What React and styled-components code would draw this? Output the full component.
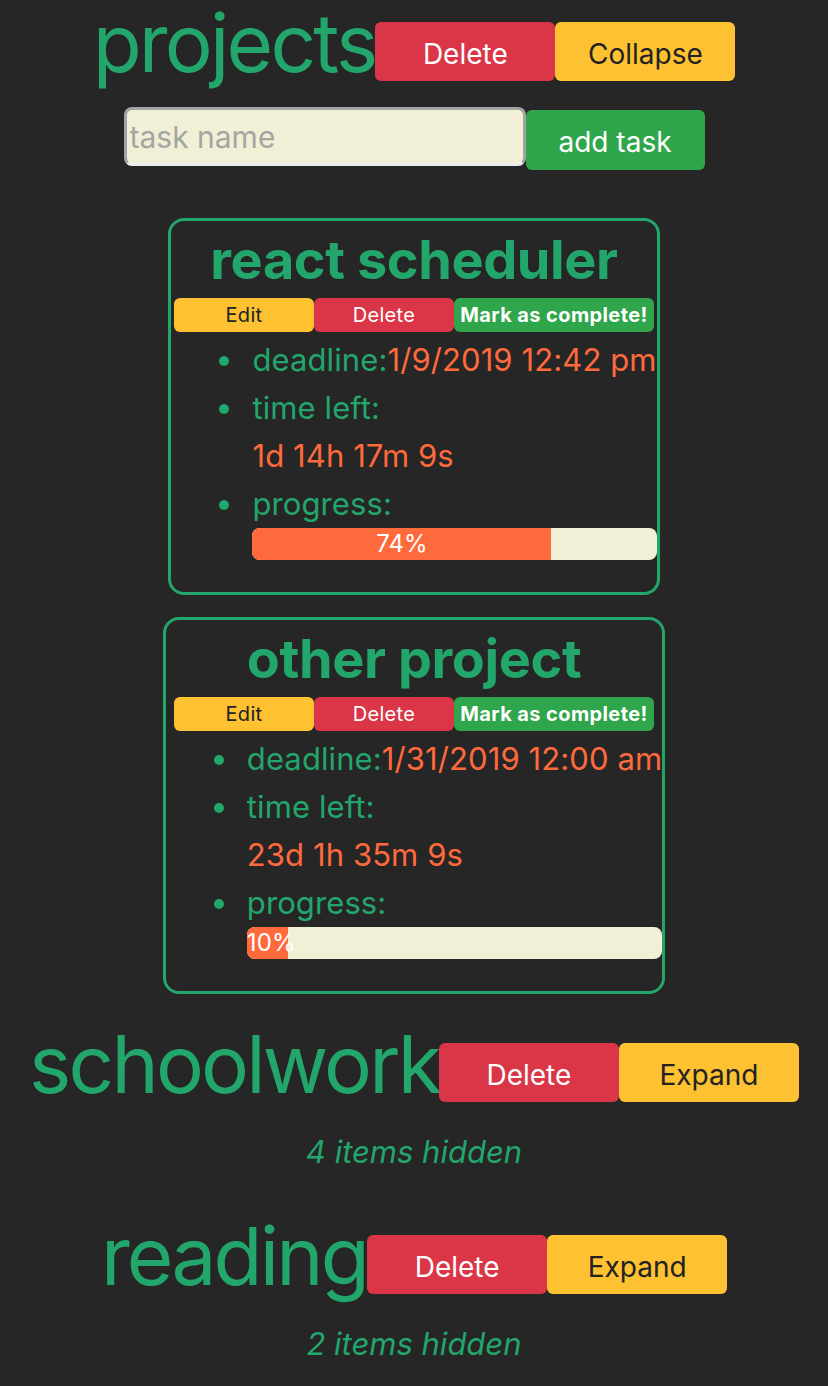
import React from 'react';
import styled, { createGlobalStyle, css } from 'styled-components';

const GREEN = '#22a66b';
const ORANGE = '#ff6a3d';
const CREAM = '#f1f0d6';

const GlobalStyle = createGlobalStyle`
  body {
    margin: 0;
    background: #262626;
    font-family: Inter, "Noto Sans", sans-serif;
  }
`;

const variants = {
  danger: css`
    background: #da3648;
    color: #ffffff;
  `,
  warning: css`
    background: #fdc131;
    color: #222222;
  `,
  success: css`
    background: #2fa64b;
    color: #ffffff;
  `,
};

const Page = styled.div`
  display: flex;
  flex-direction: column;
  align-items: center;
  gap: 27px;
  padding-bottom: 20px;
`;

const Section = styled.section`
  display: flex;
  flex-direction: column;
  align-items: center;
`;

const SectionHeader = styled.div`
  display: flex;
  justify-content: center;
  align-items: center;
`;

const SectionTitle = styled.h1`
  margin: 0 0 17px;
  font-size: 80px;
  line-height: 86px;
  font-weight: 400;
  letter-spacing: -2.8px;
  color: ${GREEN};
`;

const Button = styled.button`
  width: ${(p) => p.$width || 180}px;
  height: 59px;
  padding: 4px 0 0;
  border: none;
  border-radius: 6px;
  font-family: inherit;
  font-size: 28px;
  cursor: pointer;
  ${(p) => variants[p.$variant]}
`;

const TaskForm = styled.form`
  display: flex;
  align-items: flex-start;
  margin-top: 4px;
`;

const TaskInput = styled.input`
  box-sizing: border-box;
  width: 402px;
  height: 59px;
  padding: 0 3px;
  border: 3px solid;
  border-color: #a3a3a3 #a3a3a3 #ececec #a3a3a3;
  border-radius: 8px;
  background: ${CREAM};
  font-family: inherit;
  font-size: 30px;
  outline: none;

  &::placeholder {
    color: #a5a5a2;
  }
`;

const AddButton = styled(Button)`
  height: 60px;
  margin-top: 3px;
`;

const CardList = styled.div`
  display: flex;
  flex-direction: column;
  align-items: center;
  gap: 22px;
  margin-top: 48px;
`;

const Card = styled.div`
  display: flex;
  flex-direction: column;
  border: 3px solid ${GREEN};
  border-radius: 16px;
  padding-bottom: 32px;
`;

const CardTitle = styled.h2`
  margin: 0;
  text-align: center;
  font-size: 54px;
  line-height: 77px;
  font-weight: 700;
  letter-spacing: -0.4px;
  color: ${GREEN};
`;

const CardActions = styled.div`
  display: flex;
  align-self: center;
  width: 480px;
`;

const SmallButton = styled.button`
  width: ${(p) => p.$width}px;
  height: 34px;
  padding: 0;
  border: none;
  border-radius: 6px;
  font-family: inherit;
  font-size: 20px;
  font-weight: ${(p) => (p.$bold ? 700 : 400)};
  letter-spacing: ${(p) => (p.$bold ? 0.4 : 0.3)}px;
  cursor: pointer;
  ${(p) => variants[p.$variant]}
`;

const Details = styled.ul`
  margin: 4px 0 0;
  padding-left: 75px;
  list-style: disc;
  font-size: 31px;
  line-height: 48px;
  letter-spacing: 0.1px;
  color: ${GREEN};

  li {
    padding-left: 6px;
  }
`;

const Value = styled.span`
  color: ${ORANGE};
`;

const ValueLine = styled.div`
  color: ${ORANGE};
`;

const ProgressBar = styled.div`
  display: flex;
  height: 32px;
  border-radius: 8px;
  background: ${CREAM};
  overflow: hidden;
`;

const ProgressFill = styled.div`
  background: ${ORANGE};
  color: #ffffff;
  font-size: 24px;
  line-height: 32px;
  text-align: center;
  white-space: nowrap;
`;

const HiddenNote = styled.p`
  margin: 4px 0 10px;
  font-size: 31px;
  line-height: 48px;
  font-style: italic;
  color: ${GREEN};
`;

const tasks = [
  { name: 'react scheduler', deadline: '1/9/2019 12:42 pm', left: '1d 14h 17m 9s', progress: 74 },
  { name: 'other project', deadline: '1/31/2019 12:00 am', left: '23d 1h 35m 9s', progress: 10 },
];

const TaskCard = ({ task }) => (
  <Card>
    <CardTitle>{task.name}</CardTitle>
    <CardActions>
      <SmallButton $variant="warning" $width={140}>Edit</SmallButton>
      <SmallButton $variant="danger" $width={140}>Delete</SmallButton>
      <SmallButton $variant="success" $width={200} $bold>Mark as complete!</SmallButton>
    </CardActions>
    <Details>
      <li>
        deadline:<Value>{task.deadline}</Value>
      </li>
      <li>
        time left:
        <ValueLine>{task.left}</ValueLine>
      </li>
      <li>
        progress:
        <ProgressBar>
          <ProgressFill style={{ width: `${task.progress}%` }}>{task.progress}%</ProgressFill>
        </ProgressBar>
      </li>
    </Details>
  </Card>
);

const App = () => (
  <>
    <GlobalStyle />
    <Page>
      <Section>
        <SectionHeader>
          <SectionTitle>projects</SectionTitle>
          <Button $variant="danger">Delete</Button>
          <Button $variant="warning">Collapse</Button>
        </SectionHeader>
        <TaskForm onSubmit={(e) => e.preventDefault()}>
          <TaskInput placeholder="task name" />
          <AddButton $variant="success" $width={179}>add task</AddButton>
        </TaskForm>
        <CardList>
          {tasks.map((t) => (
            <TaskCard key={t.name} task={t} />
          ))}
        </CardList>
      </Section>

      <Section>
        <SectionHeader>
          <SectionTitle>schoolwork</SectionTitle>
          <Button $variant="danger">Delete</Button>
          <Button $variant="warning">Expand</Button>
        </SectionHeader>
        <HiddenNote>4 items hidden</HiddenNote>
      </Section>

      <Section>
        <SectionHeader>
          <SectionTitle>reading</SectionTitle>
          <Button $variant="danger">Delete</Button>
          <Button $variant="warning">Expand</Button>
        </SectionHeader>
        <HiddenNote>2 items hidden</HiddenNote>
      </Section>
    </Page>
  </>
);

export default App;
